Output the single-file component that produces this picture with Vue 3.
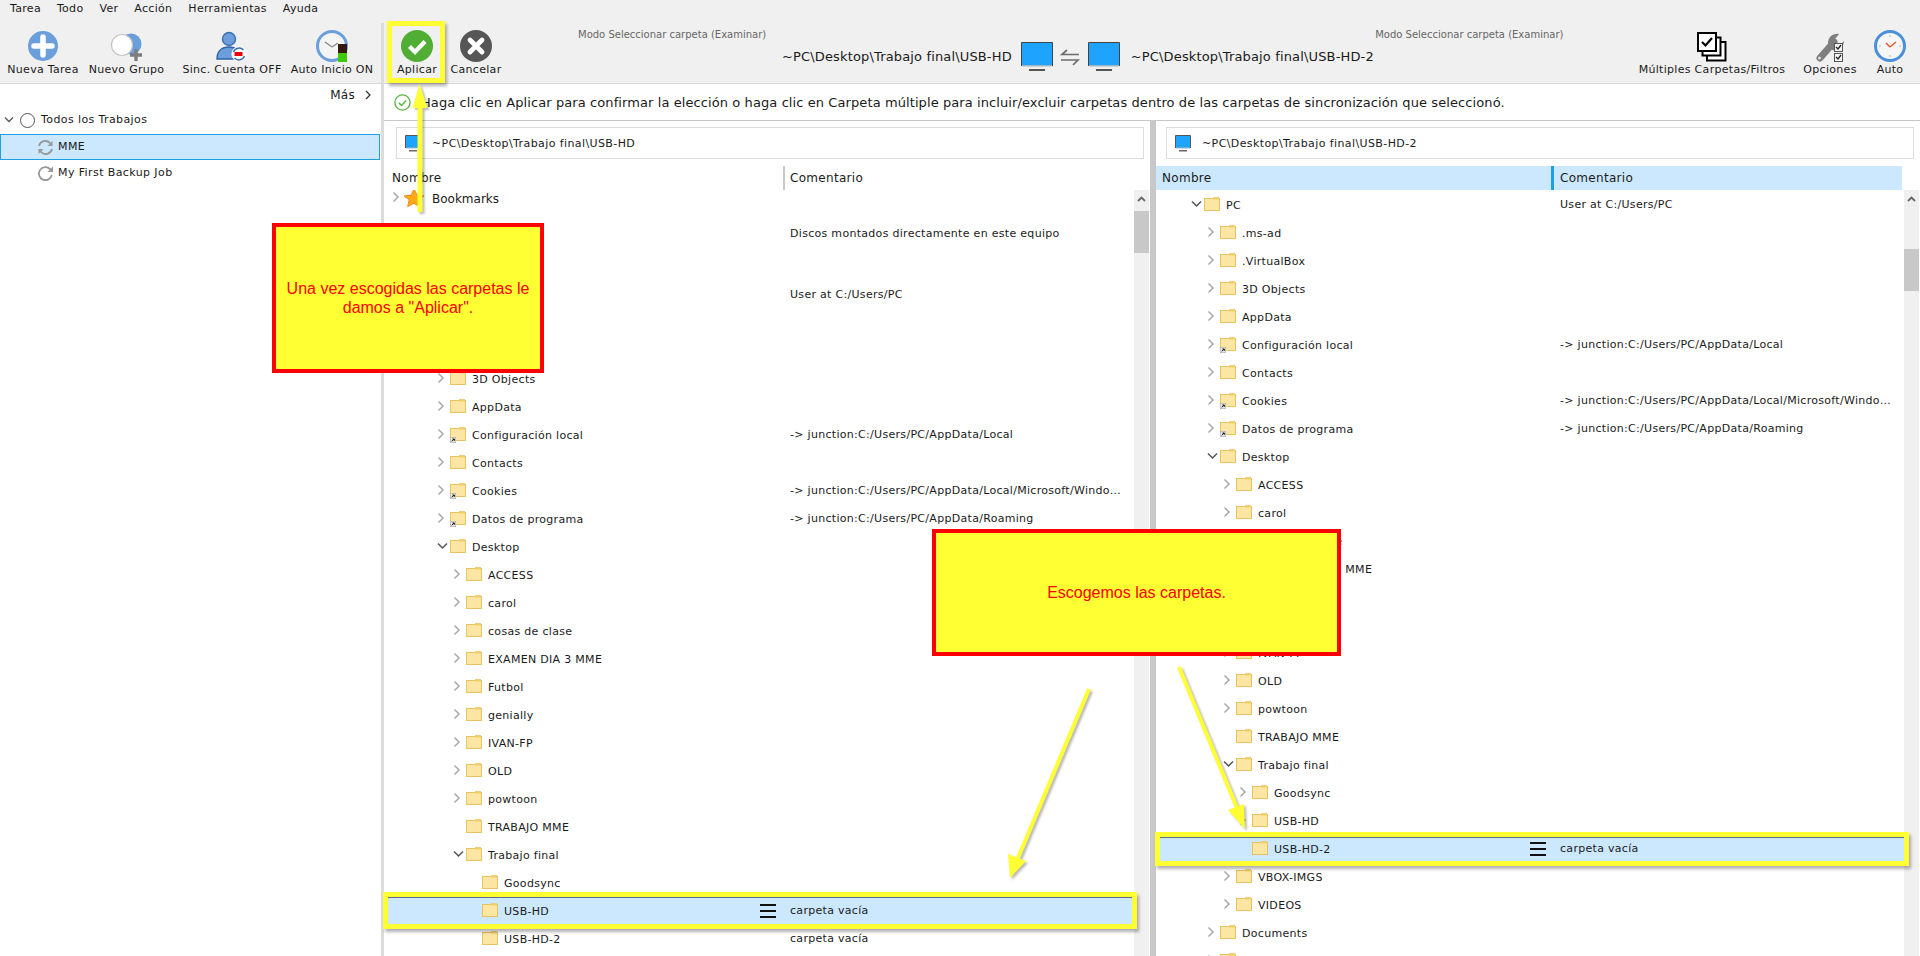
<script setup>
const menu = ['Tarea', 'Todo', 'Ver', 'Acción', 'Herramientas', 'Ayuda']
const tail = (names, level) => names.map(n => ({ n, level, c: true }))
const shared = () => [
  { n: '.ms-ad', level: 1, c: true },
  { n: '.VirtualBox', level: 1, c: true },
  { n: '3D Objects', level: 1, c: true },
  { n: 'AppData', level: 1, c: true },
  { n: 'Configuración local', level: 1, c: true, link: true, comment: '-> junction:C:/Users/PC/AppData/Local' },
  { n: 'Contacts', level: 1, c: true },
  { n: 'Cookies', level: 1, c: true, link: true, comment: '-> junction:C:/Users/PC/AppData/Local/Microsoft/Windows/INetCookies' },
  { n: 'Datos de programa', level: 1, c: true, link: true, comment: '-> junction:C:/Users/PC/AppData/Roaming' },
  { n: 'Desktop', level: 1, open: true },
  ...tail(['ACCESS', 'carol', 'cosas de clase', 'EXAMEN DIA 3 MME', 'Futbol', 'genially', 'IVAN-FP', 'OLD', 'powtoon'], 2),
  { n: 'TRABAJO MME', level: 2 },
  { n: 'Trabajo final', level: 2, open: true }
]
const pc = { n: 'PC', level: 0, open: true, comment: 'User at C:/Users/PC' }
const leftRows = [
  pc, ...shared(),
  { n: 'Goodsync', level: 3 },
  { n: 'USB-HD', level: 3, sel: true, comment: 'carpeta vacía' },
  { n: 'USB-HD-2', level: 3, comment: 'carpeta vacía' }
]
const rightRows = [
  pc, ...shared(),
  { n: 'Goodsync', level: 3, c: true },
  { n: 'USB-HD', level: 3, c: true },
  { n: 'USB-HD-2', level: 3, sel: true, comment: 'carpeta vacía' },
  ...tail(['VBOX-IMGS', 'VIDEOS'], 2),
  ...tail(['Documents', 'Downloads'], 1)
]
const panes = [
  { key: 'l', path: '~PC\\Desktop\\Trabajo final\\USB-HD', rows: leftRows, left: true },
  { key: 'r', path: '~PC\\Desktop\\Trabajo final\\USB-HD-2', rows: rightRows, left: false }
]
</script>

<template>
  <div class="app">
    <header class="top">
      <nav class="menu"><span v-for="m in menu" :key="m">{{ m }}</span></nav>
      <div class="bar">
        <div class="group g-left">
          <div class="tool t1">
            <svg class="ic" width="32" height="32" viewBox="0 0 32 32"><circle cx="16" cy="16" r="15" fill="#6a9fdc"/><path d="M16 7v18M7 16h18" stroke="#fff" stroke-width="5.5" stroke-linecap="round"/></svg>
            <span>Nueva Tarea</span>
          </div>
          <div class="tool t2">
            <svg class="ic" width="36" height="32" viewBox="0 0 36 32"><circle cx="22" cy="14" r="10.5" fill="#6a9fdc"/><circle cx="13" cy="15" r="10.5" fill="#fff" stroke="#c4c4c4" stroke-width="1.2"/><path d="M27 19v12M21 25h12" stroke="#7d7d7d" stroke-width="3.4"/></svg>
            <span>Nuevo Grupo</span>
          </div>
          <div class="tool t3">
            <svg class="ic" width="32" height="32" viewBox="0 0 32 32"><circle cx="13" cy="9" r="6.5" fill="#6b9edb" stroke="#3a6fb5" stroke-width="1.4"/><path d="M1 29c0-8 5-12 12-12s11 4 12 12z" fill="#6b9edb" stroke="#2f62a8" stroke-width="1.4"/><circle cx="23" cy="24" r="7.6" fill="#fff"/><path d="M17.5 22a6 6 0 0 1 10-2M28.500 26a6 6 0 0 1-10 2" fill="none" stroke="#3a6fb5" stroke-width="1.5"/><rect x="18.500" y="22" width="8" height="4" fill="#e8000f"/></svg>
            <span>Sinc. Cuenta OFF</span>
          </div>
          <div class="tool t4">
            <svg class="ic" width="34" height="32" viewBox="0 0 34 32"><circle cx="17" cy="16" r="14.500" fill="#f4f4f4" stroke="#6a9fdc" stroke-width="3"/><path d="M17 17l-7-5M17 17l6-4" stroke="#888" stroke-width="1.3" fill="none"/><rect x="23" y="14" width="9" height="9" fill="#331a0e"/><rect x="23" y="23" width="9" height="9" fill="#3ecb00"/></svg>
            <span>Auto Inicio ON</span>
          </div>
        </div>
        <i class="vsep"></i>
        <div class="group g-act">
          <div class="tool t5">
            <svg class="ic" width="32" height="32" viewBox="0 0 32 32"><circle cx="16" cy="16" r="16" fill="#4fae33"/><path d="M8.500 16.500l5.500 5.500 10-10.500" fill="none" stroke="#fff" stroke-width="4.200"/></svg>
            <span>Aplicar</span>
          </div>
          <div class="tool t6">
            <svg class="ic" width="32" height="32" viewBox="0 0 32 32"><circle cx="16" cy="16" r="16" fill="#565656"/><path d="M10 10l12 12M22 10L10 22" stroke="#fff" stroke-width="4.800" stroke-linecap="round"/></svg>
            <span>Cancelar</span>
          </div>
        </div>
        <div class="center">
          <div class="modes"><span>Modo Seleccionar carpeta (Examinar)</span><span>Modo Seleccionar carpeta (Examinar)</span></div>
          <div class="route">
            <span>~PC\Desktop\Trabajo final\USB-HD</span>
            <svg width="32" height="29" viewBox="0 0 32 29"><path d="M.5 24V.5h31V24" fill="#1ea4ff" stroke="#444"/><rect x="1" y="23" width="30" height="1.500" fill="#9fb4c4"/><rect x="8" y="27" width="16" height="2" fill="#555"/></svg>
            <svg class="swap" width="22" height="18" viewBox="0 0 22 18"><path d="M20 5.500H3L8 1M2 11h17l-5 5" fill="none" stroke="#6d6d6d" stroke-width="1.700"/></svg>
            <svg width="32" height="29" viewBox="0 0 32 29"><path d="M.5 24V.5h31V24" fill="#1ea4ff" stroke="#444"/><rect x="1" y="23" width="30" height="1.500" fill="#9fb4c4"/><rect x="8" y="27" width="16" height="2" fill="#555"/></svg>
            <span>~PC\Desktop\Trabajo final\USB-HD-2</span>
          </div>
        </div>
        <div class="group g-right">
          <div class="tool t7">
            <svg class="ic" width="30" height="30" viewBox="0 0 30 30"><g fill="#fff" stroke="#000" stroke-width="2"><path d="M10 10h18.500v18.500H10z"/><path d="M5.500 5.500h18v18h-18z"/><path d="M1 1h18v18H1z"/></g><path d="M5 10l3.500 3.500L15 6" fill="none" stroke="#000" stroke-width="2.200"/></svg>
            <span>Múltiples Carpetas/Filtros</span>
          </div>
          <div class="tool t8">
            <svg class="ic" width="30" height="30" viewBox="0 0 30 30"><path d="M5 26L19 10" stroke="#7f7f7f" stroke-width="7" stroke-linecap="round"/><path d="M13 11c0-6 5-10 11-9l-4 5 1 4 5 1 3-3c0 6-6 11-12 9z" fill="#7f7f7f"/><circle cx="4.500" cy="26" r="1.500" fill="#ddd"/><g fill="#f4f4f4" stroke="#555" stroke-width="1"><rect x="19.500" y="11.500" width="8" height="8"/><rect x="19.500" y="21.500" width="8" height="8"/></g><path d="M21 15l2 2 3-4M21 25l2 2 3-4" fill="none" stroke="#222" stroke-width="1.300"/></svg>
            <span>Opciones</span>
          </div>
          <div class="tool t9">
            <svg class="ic" width="32" height="32" viewBox="0 0 32 32"><circle cx="16" cy="16" r="14.500" fill="#f6f6f6" stroke="#4a8fd8" stroke-width="3"/><path d="M16 17l-4-4M16 17l6-5" stroke="#e4572e" stroke-width="1.500" fill="none"/><path d="M16 5v2M16 25v2M5 16h2M25 16h2" stroke="#bbb" stroke-width="1.200"/></svg>
            <span>Auto</span>
          </div>
        </div>
      </div>
    </header>

    <div class="body">
      <aside class="side">
        <div class="mas"><span>Más</span><svg width="8" height="10" viewBox="0 0 8 10"><path d="M2 1l4 4-4 4" fill="none" stroke="#333" stroke-width="1.300"/></svg></div>
        <div class="job all">
          <svg width="10" height="8" viewBox="0 0 10 8"><path d="M1 1.500l4 4 4-4" fill="none" stroke="#555" stroke-width="1.300"/></svg>
          <i class="ring"></i><span>Todos los Trabajos</span>
        </div>
        <div class="job item on">
          <svg width="17" height="17" viewBox="0 0 17 17"><path d="M2 7a6.500 6.500 0 0 1 11-3l2 2M15 10a6.500 6.500 0 0 1-11 3l-2-2" fill="none" stroke="#999" stroke-width="1.800"/><path d="M15.500 2v5h-5zM1.500 15v-5h5z" fill="#999"/></svg>
          <span>MME</span>
        </div>
        <div class="job item">
          <svg width="17" height="17" viewBox="0 0 17 17"><path d="M14.800 10A6.500 6.500 0 1 1 13 4l1.500 1.500" fill="none" stroke="#999" stroke-width="1.800"/><path d="M16 1.500v5.500h-5.500z" fill="#999"/></svg>
          <span>My First Backup Job</span>
        </div>
      </aside>
      <i class="side-sep"></i>

      <main class="main">
        <div class="notice">
          <svg width="17" height="17" viewBox="0 0 17 17"><circle cx="8.500" cy="8.500" r="7.600" fill="#fff" stroke="#5fb548" stroke-width="1.400"/><path d="M4.800 8.700l2.700 2.700 4.700-5" fill="none" stroke="#5fb548" stroke-width="1.500"/></svg>
          <span>Haga clic en Aplicar para confirmar la elección o haga clic en Carpeta múltiple para incluir/excluir carpetas dentro de las carpetas de sincronización que seleccionó.</span>
        </div>
        <div class="panes">
          <section v-for="p in panes" :key="p.key" class="pane" :class="p.left ? 'pane-l' : 'pane-r'">
            <div class="pathbox">
              <svg width="16" height="17" viewBox="0 0 16 17"><path d="M.5 13V.5h15V13" fill="#1ea4ff" stroke="#555"/><rect x="1" y="12.500" width="14" height="1" fill="#9fb4c4"/><rect x="4" y="15" width="8" height="1.500" fill="#666"/></svg>
              <span>{{ p.path }}</span>
            </div>
            <div class="thead">
              <span class="th-name">Nombre</span><span class="th-com">Comentario</span>
            </div>
            <div class="listwrap">
              <div class="rows">
                <template v-if="p.left">
                  <div class="row row-book">
                    <svg class="chev" width="14" height="12" viewBox="0 0 14 12"><path d="M2.500 1.500l4.500 4.500-4.500 4.500" fill="none" stroke="#aaa" stroke-width="1.500"/></svg>
                    <svg class="star" width="22" height="20" viewBox="0 0 22 20"><path d="M11 .8l3 6.400 7 .8-5.200 4.700 1.500 6.900L11 15.200l-6.300 3.400 1.500-6.900L1 8l7-.8z" fill="#ffaa14" stroke="#f28a1e"/></svg>
                    <span class="nm">Bookmarks</span>
                  </div>
                  <div class="row row-drive"><span class="cm">Discos montados directamente en este equipo</span></div>
                </template>
                <div v-for="r in p.rows" :key="r.n + r.level" class="row" :class="{ sel: r.sel }" :style="{ paddingLeft: (34 + r.level * 16) + 'px' }">
                  <svg class="chev" width="14" height="12" viewBox="0 0 14 12">
                    <path v-if="r.open" d="M2 3.500l4.500 4.500 4.500-4.500" fill="none" stroke="#555" stroke-width="1.500"/>
                    <path v-else-if="r.c" d="M2.500 1.500l4.500 4.500-4.500 4.500" fill="none" stroke="#aaa" stroke-width="1.500"/>
                  </svg>
                  <svg class="folder" width="16" height="14" viewBox="0 0 16 14">
                    <rect x=".5" y="1.500" width="15" height="12" fill="#fde6a4" stroke="#e9c261"/>
                    <rect x="9" y="0" width="6" height="2.500" fill="#f0cd72"/>
                    <template v-if="r.link"><rect x=".3" y="10.300" width="5.400" height="5.400" fill="#e6e6e6" stroke="#aaa" stroke-width=".6"/><path d="M1.800 14.300l2.300-2.300M2.500 12h1.800v1.800" stroke="#111" stroke-width="1" fill="none"/></template>
                  </svg>
                  <span class="nm">{{ r.n }}</span>
                  <svg v-if="r.sel" class="burger" width="16" height="14" viewBox="0 0 16 14"><path d="M0 1h16M0 7h16M0 13h16" stroke="#111" stroke-width="2"/></svg>
                  <span v-if="r.comment" class="cm">{{ r.comment }}</span>
                </div>
              </div>
              <div class="scroll">
                <svg width="15" height="18" viewBox="0 0 15 18"><path d="M4 11l3.500-3.500L11 11" fill="none" stroke="#666" stroke-width="1.800"/></svg>
                <i class="thumb"></i>
              </div>
            </div>
          </section>
        </div>
      </main>
    </div>

    <div class="mark mark-apply"></div>
    <div class="mark mark-left"></div>
    <div class="mark mark-right"></div>
    <svg class="arrows" width="1920" height="956" viewBox="0 0 1920 956">
      <g fill="#ffff33" stroke="#ffff33">
        <path d="M420 212V100" stroke-width="5" fill="none"/><path d="M419.500 84l8 24h-15z" stroke="none"/>
        <path d="M1089 689L1018 858" stroke-width="4" fill="none"/><path d="M1010 878l-2-24 18 7z" stroke="none"/>
        <path d="M1179 667L1237 808" stroke-width="4" fill="none"/><path d="M1245 829l-17-19 16-6z" stroke="none"/>
      </g>
    </svg>
    <div class="note note-a">Una vez escogidas las carpetas le damos a "Aplicar".</div>
    <div class="note note-b">Escogemos las carpetas.</div>
  </div>
</template>

<style>
html, body { margin: 0; padding: 0; background: #fff; }
</style>

<style scoped>
.app { position: relative; width: 1920px; height: 956px; overflow: hidden; background: #fff; color: #1a1a1a; font: 11px/14px "DejaVu Sans", sans-serif; letter-spacing: .3px; }
svg { display: block; flex: none; overflow: visible; }
i { display: block; }

.top { height: 83px; background: #f0f0f0; border-bottom: 1px solid #d9d9d9; }
.menu { display: flex; gap: 16px; height: 17px; padding-left: 10px; line-height: 17px; }
.bar { display: flex; height: 66px; }
.group { display: flex; }
.tool { display: flex; flex-direction: column; align-items: center; width: 60px; padding-top: 13px; box-sizing: border-box; white-space: nowrap; }
.tool .ic { height: 32px; }
.tool span { margin-top: 1px; line-height: 14px; }
.g-left { width: 381px; }
.t1 { width: 86px; }
.t2 { width: 81px; }
.t3 { width: 130px; }
.t4 { width: 84px; margin-left: -7px; }
.vsep { width: 3px; margin-top: 6px; background: #dcdcdc; }
.g-act { width: 136px; padding-left: 5px; box-sizing: border-box; }
.t5 { width: 56px; }
.t6 { width: 62px; }
.center { flex: none; width: 1045px; padding-top: 10px; box-sizing: border-box; }
.modes { display: flex; padding-left: 58px; gap: 609px; height: 16px; font-size: 10px; line-height: 16px; color: #666; white-space: nowrap; letter-spacing: 0; }
.route { display: flex; padding-left: 262px; height: 29px; margin-top: -1px; font-size: 13px; letter-spacing: .15px; white-space: nowrap; }
.route > span { height: 29px; line-height: 30px; }
.route > svg { margin: 0 0 0 9px; }
.route > .swap { margin: 7px 7px 0 6px; }
.route > svg + svg { margin-left: 0; }
.route > svg:not(.swap) + span { margin-left: 11px; }
.g-right { margin-left: 67px; }
.t7 { width: 160px; padding-top: 15px; }
.t7 .ic, .t8 .ic { height: 30px; }
.t8 { width: 76px; padding-top: 15px; }
.t9 { width: 44px; }

.body { display: flex; height: 872px; }
.side { width: 381px; flex: none; }
.side-sep { width: 3px; flex: none; background: #dcdcdc; }
.mas { display: flex; justify-content: flex-end; align-items: center; gap: 9px; height: 22px; padding-right: 9px; font-size: 12px; }
.job { display: flex; align-items: center; height: 26px; }
.all { height: 28px; padding-left: 4px; letter-spacing: .4px; }
.all svg { margin-right: 6px; }
.ring { width: 13px; height: 13px; border: 1.500px solid #555; border-radius: 50%; margin-right: 6px; }
.item { height: 26px; padding-left: 37px; gap: 4px; box-sizing: border-box; letter-spacing: .4px; }
.on { border: 1px solid #1e9fe0; background: #cce8ff; padding-left: 36px; width: 380px; }
.on span { margin-top: -1px; }

.main { width: 1536px; flex: none; margin-left: 2px; }
.notice { display: flex; align-items: center; gap: 10px; height: 36px; padding-left: 10px; border-bottom: 1px solid #c8c8c8; font-size: 13px; letter-spacing: .09px; white-space: nowrap; margin-left: -2px; }
.notice span { margin-top: 1px; }
.panes { display: flex; height: 835px; }
.pane { flex: none; width: 764px; }
.pane-r { width: 764px; border-left: 6px solid #c8c8c8; }
.pathbox { display: flex; align-items: center; gap: 11px; height: 30px; margin: 6px 6px 7px 10px; padding-left: 8px; border: 1px solid #dcdcdc; letter-spacing: .4px; }
.pathbox span { margin-top: 1px; }
.thead { display: flex; align-items: center; height: 24px; width: 746px; font-size: 12px; }
.pane-r .thead { background: #cce8ff; }
.th-name { width: 391px; padding-left: 6px; }
.th-com { padding-left: 5px; border-left: 2px solid #c8c8c8; line-height: 24px; }
.pane-r .th-name { width: 389px; }
.pane-r .th-com { border-left: 3px solid #1e9fe0; padding-left: 6px; }
.listwrap { display: flex; height: 800px; overflow: hidden; }
.rows { position: relative; flex: none; width: 748px; padding-top: 1px; box-sizing: border-box; }
.pane-l .rows { padding-top: 0; }
.row { position: relative; display: flex; align-items: center; height: 28px; white-space: nowrap; box-sizing: border-box; }
.row-book { height: 16px; padding-left: 0; margin-bottom: 14px; }
.row-book .chev { margin-left: 5px; }
.row-book .star { margin: 0 7px 0 -2px; }
.row-drive { margin-bottom: 33px; }
.sel { background: #cce8ff; }
.chev { margin-top: -3px; }
.folder { margin-top: -3px; }
.nm { margin-left: 6px; margin-top: 1px; }
.row-book .nm { margin: 1px 0 0; font-size: 12px; letter-spacing: 0; }
.cm { position: absolute; left: 404px; top: 7px; max-width: 340px; overflow: hidden; text-overflow: ellipsis; }
.burger { position: absolute; left: 374px; top: 7px; }
.scroll { flex: none; width: 15px; background: #f0f0f0; }
.thumb { width: 15px; background: #c8c8c8; }
.pane-l .thumb { height: 42px; margin-top: 3px; }
.pane-r .thumb { height: 42px; margin-top: 41px; }

.mark { position: absolute; box-sizing: border-box; border: 5px solid #ffff33; box-shadow: 2px 3px 3px rgba(0,0,0,.3), inset 0 1px 0 rgba(40,60,90,.7); }
.mark-apply { left: 387px; top: 21px; width: 58px; height: 62px; box-shadow: 2px 3px 3px rgba(0,0,0,.3); }
.mark-left { left: 383px; top: 892px; width: 754px; height: 37px; }
.mark-right { left: 1155px; top: 832px; width: 754px; height: 34px; }
.arrows { position: absolute; left: 0; top: 0; filter: drop-shadow(2px 2px 1px rgba(0,0,0,.28)); }
.note { position: absolute; display: flex; align-items: center; justify-content: center; box-sizing: border-box; padding: 0 10px; border: 4px solid #ff0000; background: #ffff33; color: #ff0000; font: 16px/19px "Liberation Sans", sans-serif; letter-spacing: 0; text-align: center; }
.note-a { left: 272px; top: 223px; width: 272px; height: 150px; }
.note-b { left: 932px; top: 529px; width: 409px; height: 127px; }
</style>
